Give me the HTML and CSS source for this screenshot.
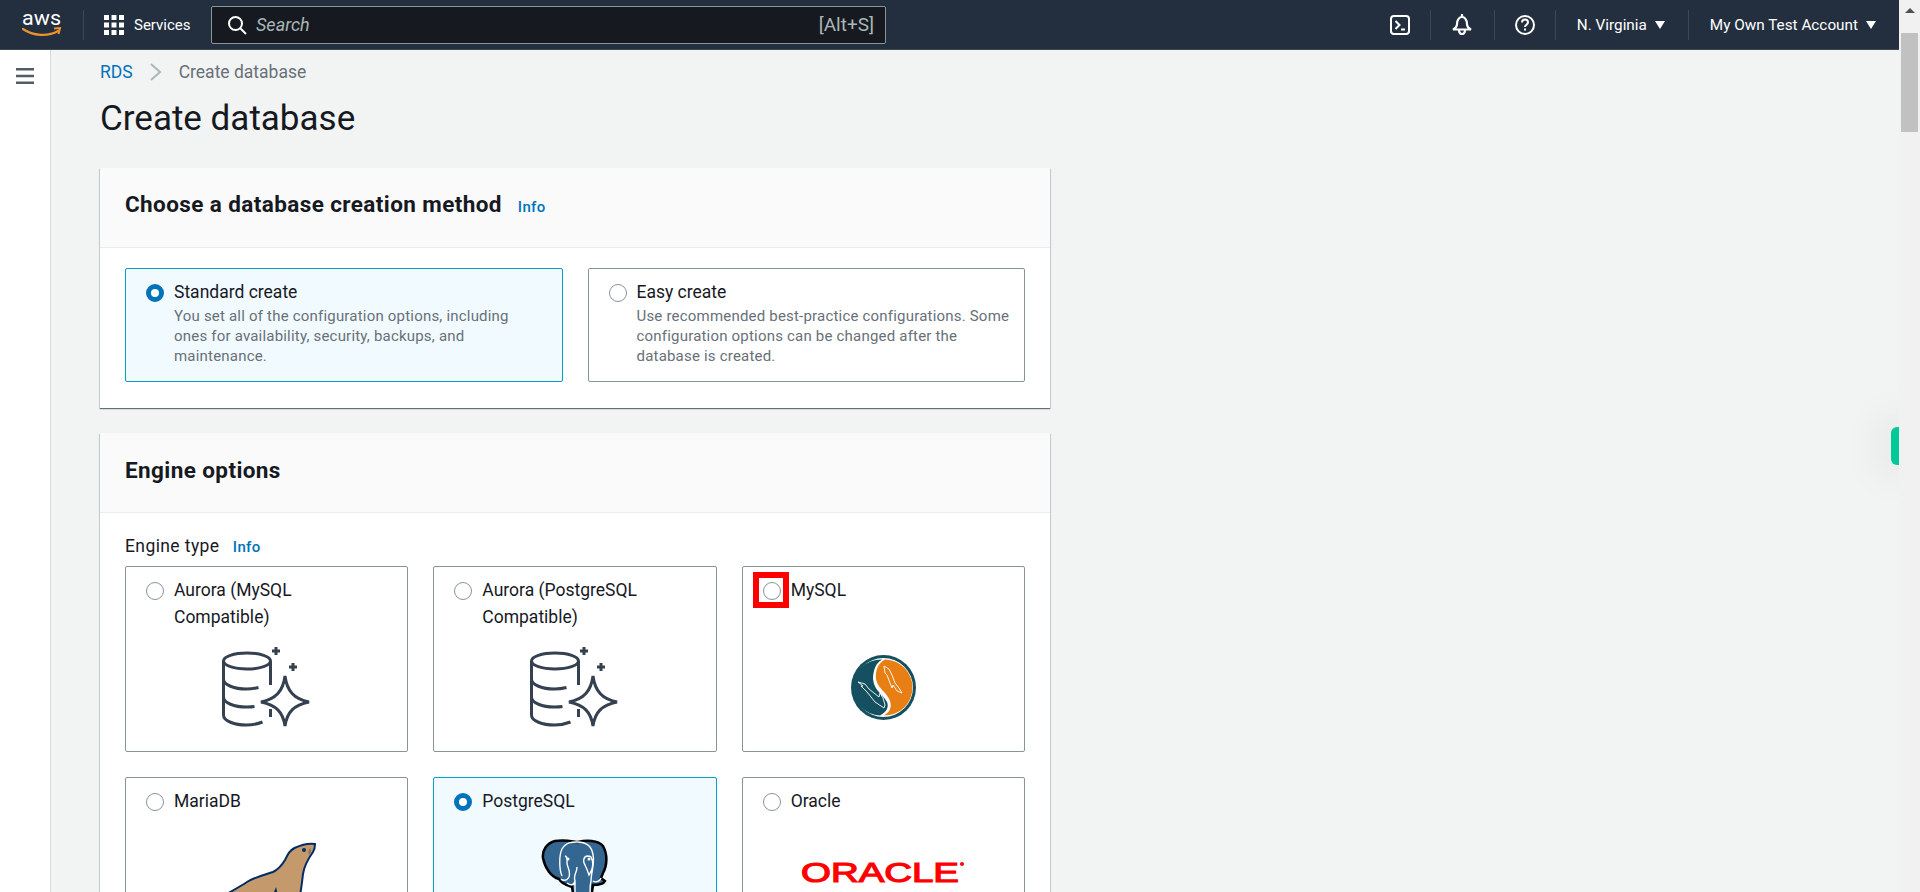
FILE: index.html
```html
<!DOCTYPE html>
<html>
<head>
  <meta charset="UTF-8" />
  <title>Create database</title>
  <link rel="stylesheet" href="styles.css">
</head>
<body>
  <div class="app">
    <div class="page">
      <header class="topnav">
        <svg class="aws-logo" width="40" height="36" viewBox="0 0 40 36">
          <text x="0" y="20" textLength="39" lengthAdjust="spacingAndGlyphs" class="aws-text">aws</text>
          <path d="M1 24c10 7 25 8 35 2" fill="none" stroke="#ec912d" stroke-width="2.2" stroke-linecap="round"/>
          <path d="M32 23.500l6-.5-1.500 6" fill="none" stroke="#ec912d" stroke-width="2"/>
        </svg>
        <span class="nav-sep sep-logo"></span>
        <svg class="grid-icon" width="20" height="20" viewBox="0 0 20 20" fill="#fff">
          <rect x="0" y="0" width="5" height="5"/><rect x="7.500" y="0" width="5" height="5"/><rect x="15" y="0" width="5" height="5"/>
          <rect x="0" y="7.500" width="5" height="5"/><rect x="7.500" y="7.500" width="5" height="5"/><rect x="15" y="7.500" width="5" height="5"/>
          <rect x="0" y="15" width="5" height="5"/><rect x="7.500" y="15" width="5" height="5"/><rect x="15" y="15" width="5" height="5"/>
        </svg>
        <span class="services">Services</span>
        <div class="search">
          <svg width="20" height="20" viewBox="0 0 20 20" fill="none" stroke="#fff" stroke-width="2">
            <circle cx="8.500" cy="8.500" r="6.500"/><path d="M13.500 13.500l5.500 5.500"/>
          </svg>
          <span class="search-text">Search</span>
          <span class="search-key">[Alt+S]</span>
        </div>
        <div class="nav-right">
          <svg class="nav-icon" width="20" height="20" viewBox="0 0 20 20" fill="none" stroke="#fff" stroke-width="2">
            <rect x="1" y="1" width="18" height="18" rx="3"/><path d="M5.500 6l4 4-4 4M11 14.500h4"/>
          </svg>
          <span class="nav-sep"></span>
          <svg class="nav-icon" width="20" height="21" viewBox="0 0 20 21" fill="none" stroke="#fff" stroke-width="2.200">
            <path d="M10 0v3M5 10c0-4.500 2.500-7 5-7s5 2.500 5 7c0 2.500 2 4.500 4 5.500H1c2-1 4-3 4-5.500zM7 15.500c0 3 1.500 4.500 3 4.500s3-1.500 3-4.500"/>
          </svg>
          <span class="nav-sep"></span>
          <svg class="nav-icon" width="20" height="20" viewBox="0 0 20 20" fill="none" stroke="#fff" stroke-width="2">
            <circle cx="10" cy="10" r="9"/><path d="M7 7.500c0-2 1.500-3 3-3s3 1 3 2.800c0 2.400-3 2.400-3 4.700"/><path d="M10 13.500v2"/>
          </svg>
          <span class="nav-sep"></span>
          <span class="nav-menu">N. Virginia<i class="caret"></i></span>
          <span class="nav-sep"></span>
          <span class="nav-menu">My Own Test Account<i class="caret"></i></span>
        </div>
      </header>

      <div class="layout">
        <aside class="sidebar">
          <svg width="18" height="16" viewBox="0 0 18 16" fill="#545b64">
            <rect width="18" height="2.500"/><rect y="6.750" width="18" height="2.500"/><rect y="13.500" width="18" height="2.500"/>
          </svg>
        </aside>

        <main class="content">
          <nav class="breadcrumb">
            <a>RDS</a>
            <svg width="12" height="18" viewBox="0 0 12 18" fill="none" stroke="#aab7b8" stroke-width="2"><path d="M1 1l9 8-9 8"/></svg>
            <span>Create database</span>
          </nav>
          <h1>Create database</h1>

          <section class="card">
            <div class="card-header method-header">
              <h2>Choose a database creation method</h2>
              <a class="info">Info</a>
            </div>
            <div class="card-body method-grid">
              <div class="tile selected">
                <span class="radio"></span>
                <div>
                  <div class="tile-label">Standard create</div>
                  <div class="tile-desc">You set all of the configuration options, including ones for availability, security, backups, and maintenance.</div>
                </div>
              </div>
              <div class="tile tile-easy">
                <span class="radio"></span>
                <div>
                  <div class="tile-label">Easy create</div>
                  <div class="tile-desc">Use recommended best-practice configurations. Some configuration options can be changed after the database is created.</div>
                </div>
              </div>
            </div>
          </section>

          <section class="card">
            <div class="card-header">
              <h2>Engine options</h2>
            </div>
            <div class="card-body">
              <div class="field-label"><span>Engine type</span> <a class="info">Info</a></div>
              <div class="engine-grid">
                <div class="engine">
                  <div class="engine-head"><span class="radio"></span><div class="tile-label">Aurora (MySQL Compatible)</div></div>
                  <svg class="logo logo-aurora" width="90" height="80" viewBox="0 0 90 80" fill="none" stroke="#354150" stroke-width="3">
                    <use href="#aurora-icon"/>
                  </svg>
                </div>
                <div class="engine">
                  <div class="engine-head"><span class="radio"></span><div class="tile-label">Aurora (PostgreSQL Compatible)</div></div>
                  <svg class="logo logo-aurora" width="90" height="80" viewBox="0 0 90 80" fill="none" stroke="#354150" stroke-width="3">
                    <use href="#aurora-icon"/>
                  </svg>
                </div>
                <div class="engine">
                  <div class="engine-head"><span class="radio"></span><div class="tile-label">MySQL</div></div>
                  <span class="highlight"></span>
                  <svg class="logo logo-mysql" width="65" height="65" viewBox="0 0 65 65">
                    <circle cx="32.500" cy="32.500" r="32.500" fill="#14505f"/>
                    <circle cx="32.500" cy="32.500" r="29.500" fill="#fff"/>
                    <path d="M31 4.500A28 28 0 0 0 29 60.500C36 57 38 52 36 47 32 39 23 36 22 24 22 15 25 8 31 4.500z" fill="#14505f"/>
                    <path d="M34 4.500C27 8 24 16 25 24 27 34 36 37 39 46 41 52 39 57 33 60.500A28 28 0 0 0 34 4.500z" fill="#e87f14"/>
                    <path d="M33 11l1 7 2 2 3 8 2 5 1-3 4 6 5 2-3-5-4-5-3-8-3-6-5-3z" fill="none" stroke="#fff" stroke-width=".9"/>
                    <path d="M7 27l5 4-2 0 6 6 8 10 9 6 1-3-2-7-3-5-1 4-5-4-5-4-4-5-7-2z" fill="none" stroke="#fff" stroke-width=".9"/>
                  </svg>
                </div>
                <div class="engine">
                  <div class="engine-head"><span class="radio"></span><div class="tile-label">MariaDB</div></div>
                  <svg class="logo logo-maria" width="100" height="60" viewBox="0 0 100 60">
                    <path d="M98 3C92 2 84 4 77.500 7 72 10 71 13 68 19 65 24 62 28 56 31 47 34 38 36 30 41 24 45 15 50 8 54L2 60H82C84 50 85 42 86 33 87 26 91 18 96 11 98 8 98 6 98 3z" fill="#c49a6c" stroke="#002b64" stroke-width="2"/>
                    <circle cx="87" cy="9" r="2" fill="#002b64"/>
                    <path d="M93 7c2 2 1 6-1 7-1-2-1-5 1-7z" fill="#8a7a63"/>
                    <path d="M55 56l4-10 2 8zM66 60l5-9 2 4 4-4v9z" fill="#002b64"/>
                  </svg>
                </div>
                <div class="engine selected">
                  <div class="engine-head"><span class="radio"></span><div class="tile-label">PostgreSQL</div></div>
                  <svg class="logo logo-pg" width="67" height="60" viewBox="0 0 67 60">
                    <path d="M14 2C25 0 33 3 37 3 45 1 57 1 62 7 67 16 66 27 62 34L60 39 64 42C62 46 56 46 52 46L50 60H33L31 48C24 46 20 44 18 40 10 38 4 29 2 19 1 11 6 4 14 2z" fill="#336791" stroke="#000" stroke-width="2.500"/>
                    <path d="M21 37C18 30 18 16 21 10 25 3 31 3 36 3 46 3 51 8 52 16 54 24 50 34 50 42 48 50 50 56 49 60M34 60V42C32 36 36 34 36 28M20 40C22 42 26 42 28 38 30 32 26 28 26 24 26 20 27 18 24 17M46 17C42 18 42 23 44 26 46 30 47 33 48 36 52 30 53 24 50 18 49 17 47 17 46 17M26 44C30 47 33 46 34 42M52 42C55 44 59 42 60 39" fill="none" stroke="#fff" stroke-width="1.400"/>
                    <circle cx="27" cy="20" r="1.500" fill="#fff"/>
                    <circle cx="48" cy="20" r="1.500" fill="#fff"/>
                  </svg>
                </div>
                <div class="engine">
                  <div class="engine-head"><span class="radio"></span><div class="tile-label">Oracle</div></div>
                  <svg class="logo logo-oracle" width="164" height="32" viewBox="0 0 164 32">
                    <text x="0" y="26" textLength="158" lengthAdjust="spacingAndGlyphs" class="oracle-text">ORACLE</text>
                    <circle cx="161" cy="8" r="2" fill="#f00"/>
                  </svg>
                </div>
              </div>
            </div>
          </section>
        </main>
      </div>
      <div class="side-tab"></div>
    </div>

    <div class="scrollbar">
      <i class="scroll-arrow"></i>
      <div class="scroll-thumb"></div>
    </div>
  </div>

  <svg class="defs" width="0" height="0">
    <defs>
      <g id="aurora-icon">
        <ellipse cx="25" cy="14" rx="23.500" ry="8"/>
        <path d="M1.500 14v54c0 6 11 10 23 10 6 0 11-1 16-3M1.500 32c0 6 11 10 23 10 4 0 8-.5 12-1.500M1.500 50c0 6 11 10 23 10 3 0 5 0 8-.5M48.500 14v24M48.500 62v8"/>
        <path d="M63 29C65 44 72 52 87 55 72 58 65 65 63 79 61 65 54 58 39 55 54 52 61 44 63 29z"/>
        <path d="M54 0v8M50 4h8M71 16v8M67 20h8"/>
      </g>
    </defs>
  </svg>
</body>
</html>
```

FILE: styles.css
```css
html, body {
  margin: 0;
  height: 100%;
  overflow: hidden;
}

body {
  font-family: Roboto, "Noto Sans", Arial, sans-serif;
  font-size: 17.5px;
  color: #16191f;
  background-color: #f2f3f3;
}

.defs {
  position: absolute;
}

.app {
  display: flex;
  height: 100vh;
}

.page {
  position: relative;
  flex: 1;
  min-width: 0;
  display: flex;
  flex-direction: column;
  overflow: hidden;
}

/* top bar */
.topnav {
  display: flex;
  align-items: center;
  flex-shrink: 0;
  height: 49px;
  padding: 0 23px 0 22px;
  background-color: #232f3e;
  border-bottom: 1px solid #414750;
  color: #fff;
}

.aws-logo {
  flex-shrink: 0;
  margin-top: -4px;
}

.aws-text {
  font-size: 21px;
  fill: #fff;
}

.nav-sep {
  width: 1px;
  height: 30px;
  background-color: #414750;
}

.sep-logo {
  margin: 0 20px 0 21px;
}

.services {
  margin-left: 10px;
  width: 56px;
  font-size: 15px;
  white-space: nowrap;
}

.search {
  display: flex;
  align-items: center;
  box-sizing: border-box;
  width: 675px;
  height: 38px;
  margin-left: 21px;
  padding: 0 11px 0 15px;
  background-color: #16191f;
  border: 1px solid #879596;
  border-radius: 2px;
}

.search-text {
  flex: 1;
  margin-left: 9px;
  font-size: 18px;
  font-style: italic;
  color: #aab7b8;
}

.search-key {
  font-size: 19px;
  color: #aab7b8;
}

.nav-right {
  display: flex;
  align-items: center;
  margin-left: auto;
}

.nav-icon {
  flex-shrink: 0;
}

.nav-right .nav-icon:nth-child(1) { margin-right: 20px; }
.nav-right .nav-icon:nth-child(3) { margin: 0 22px 0 21px; }
.nav-right .nav-icon:nth-child(5) { margin: 0 20px 0 20px; }

.nav-menu {
  display: flex;
  align-items: center;
  margin: 0 23px 0 21px;
  font-size: 15.300px;
}

.nav-right .nav-menu:last-child {
  margin-right: 0;
}

.caret {
  width: 0;
  height: 0;
  margin-left: 8px;
  border-left: 5.500px solid transparent;
  border-right: 5.500px solid transparent;
  border-top: 8px solid #fff;
}

/* page body */
.layout {
  flex: 1;
  display: flex;
  min-height: 0;
}

.sidebar {
  flex-shrink: 0;
  box-sizing: border-box;
  width: 51px;
  padding: 18px 0 0 16px;
  background-color: #fff;
  border-right: 1px solid #d5dbdb;
}

.sidebar svg {
  display: block;
}

.content {
  box-sizing: border-box;
  width: 999px;
  padding-left: 49px;
}

.breadcrumb {
  display: flex;
  align-items: center;
  height: 44px;
  gap: 17px;
  color: #687078;
}

.breadcrumb a {
  color: #0073bb;
}

h1 {
  margin: 0;
  padding-top: 2px;
  padding-bottom: 26px;
  font-size: 35px;
  line-height: 46px;
  font-weight: 400;
}

.card {
  width: 950px;
  margin-bottom: 25px;
  background-color: #fff;
  box-shadow: 0 1px 1px 0 rgba(0, 28, 36, 0.5), 1px 1px 1px 0 rgba(0, 28, 36, 0.1), -1px 1px 1px 0 rgba(0, 28, 36, 0.1);
}

.card-header {
  display: flex;
  align-items: center;
  box-sizing: border-box;
  height: 80px;
  padding: 0 25px 5px;
  background-color: #fafafa;
  border-bottom: 1px solid #eaeded;
}

.method-header {
  padding-bottom: 8px;
}

h2 {
  margin: 0;
  font-size: 22.500px;
  font-weight: 700;
  letter-spacing: 0.400px;
}

.info {
  font-size: 15px;
  font-weight: 500;
  letter-spacing: 0.300px;
  color: #0073bb;
}

.card-header .info {
  margin: 6px 0 0 16px;
}

.card-body {
  padding: 20px 25px 26px;
}

.method-grid {
  display: grid;
  grid-template-columns: 1fr 1fr;
  gap: 25px;
}

.tile {
  display: flex;
  gap: 10px;
  box-sizing: border-box;
  height: 114px;
  padding: 10px 16px 0 20px;
  border: 1px solid #879596;
  border-radius: 2px;
}

.tile-easy {
  padding-right: 4px;
}

.tile.selected,
.engine.selected {
  background-color: #f1faff;
  border-color: #00a1c9;
}

.radio {
  flex-shrink: 0;
  box-sizing: border-box;
  width: 18px;
  height: 18px;
  margin-top: 5px;
  background-color: #fff;
  border: 1.500px solid #879596;
  border-radius: 50%;
}

.selected .radio {
  border: 5px solid #0073bb;
}

.tile-label {
  font-size: 17.500px;
  line-height: 27px;
}

.tile-desc {
  font-size: 15px;
  line-height: 20px;
  letter-spacing: 0.200px;
  color: #687078;
}

.field-label {
  box-sizing: border-box;
  height: 33px;
  line-height: 27px;
}

.field-label span {
  letter-spacing: 0.400px;
}

.field-label .info {
  margin-left: 9px;
}

.engine-grid {
  display: grid;
  grid-template-columns: repeat(3, 1fr);
  grid-auto-rows: 186px;
  gap: 25px;
}

.engine {
  position: relative;
  box-sizing: border-box;
  padding: 10px 20px 0;
  border: 1px solid #879596;
  border-radius: 2px;
}

.engine-head {
  display: flex;
  gap: 10px;
}

.logo {
  display: block;
  margin-left: auto;
  margin-right: auto;
}

.logo-aurora { margin-top: 16px; }
.logo-mysql  { margin-top: 51px; }
.logo-maria  { margin-top: 26px; }
.logo-pg     { margin-top: 24px; }
.logo-oracle { margin-top: 41px; }

.oracle-text {
  font-family: "Liberation Sans", Arial, sans-serif;
  font-size: 28px;
  fill: #f00;
  stroke: #f00;
  stroke-width: 1.200px;
}

.highlight {
  position: absolute;
  left: 10px;
  top: 5px;
  box-sizing: border-box;
  width: 36px;
  height: 36px;
  border: 6px solid #f00;
}

/* overlay tab on the right edge */
.side-tab {
  position: absolute;
  right: 0;
  top: 427px;
  width: 8px;
  height: 38px;
  background-color: #00c998;
  border-radius: 6px 0 0 6px;
  box-shadow: 0 0 40px 14px rgba(0, 0, 0, 0.05);
}

/* scrollbar */
.scrollbar {
  position: relative;
  flex-shrink: 0;
  width: 21px;
  background-color: #f1f1f1;
}

.scroll-arrow {
  display: block;
  width: 0;
  height: 0;
  margin: 8px auto 0;
  border-left: 5px solid transparent;
  border-right: 5px solid transparent;
  border-bottom: 5px solid #505050;
}

.scroll-thumb {
  height: 99px;
  margin: 20px 2px 0;
  background-color: #c1c1c1;
}
```
